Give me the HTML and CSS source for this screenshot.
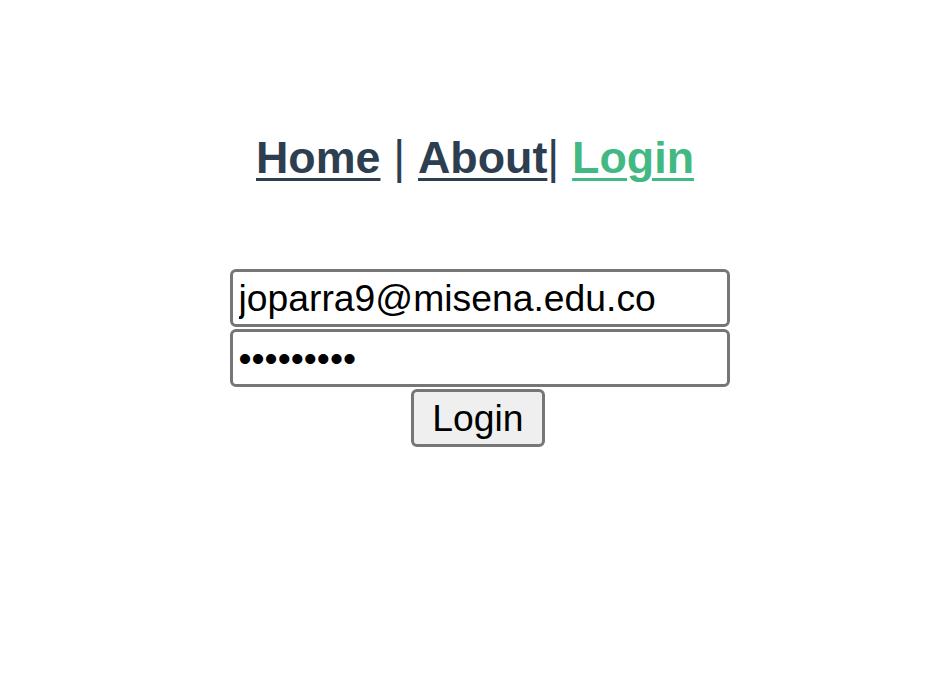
FILE: index.html
```html
<!DOCTYPE html>
<html>
<head>
<meta charset="utf-8">
<link rel="stylesheet" href="styles.css">
</head>
<body>
<div class="app">
  <nav class="nav">
    <a href="#" class="link">Home</a><span class="sep"> | </span><a href="#" class="link">About</a><span class="sep">| </span><a href="#" class="link active">Login</a>
  </nav>
  <form class="form">
    <input class="field" type="text" value="joparra9@misena.edu.co">
    <input class="field" type="password" value="123456789">
    <button class="btn" type="button">Login</button>
  </form>
</div>
</body>
</html>
```
FILE: styles.css
```css
html, body {
  margin: 0;
  padding: 0;
  background: #ffffff;
}
.app {
  font-family: "Liberation Sans", Arial, sans-serif;
  color: #2c3e50;
  text-align: center;
}
.nav {
  padding: 132px 0 86px;
  font-size: 44.8px;
  font-weight: bold;
  line-height: 51px;
  color: #2c3e50;
}
.sep {
  font-weight: normal;
  font-size: 46px;
}
.link {
  color: #2c3e50;
  text-decoration: underline;
  text-decoration-thickness: 3px;
  text-underline-offset: 5px;
}
.link.active {
  color: #42b983;
}
.form {
  display: flex;
  flex-direction: column;
  align-items: center;
  gap: 2px;
  margin: 0;
  padding-left: 9px;
}
.field {
  box-sizing: border-box;
  width: 500px;
  height: 58px;
  margin: 0;
  padding: 0 6px;
  border: 3px solid #767676;
  border-radius: 6px;
  font-family: "Liberation Sans", Arial, sans-serif;
  font-size: 37.3px;
  color: #000000;
  background: #ffffff;
  outline: none;
}
.btn {
  box-sizing: border-box;
  width: 134px;
  height: 58px;
  margin: 0 3px 0 0;
  padding: 0;
  border: 3px solid #767676;
  border-radius: 6px;
  background: #efefef;
  font-family: "Liberation Sans", Arial, sans-serif;
  font-size: 37.3px;
  color: #000000;
}
```
